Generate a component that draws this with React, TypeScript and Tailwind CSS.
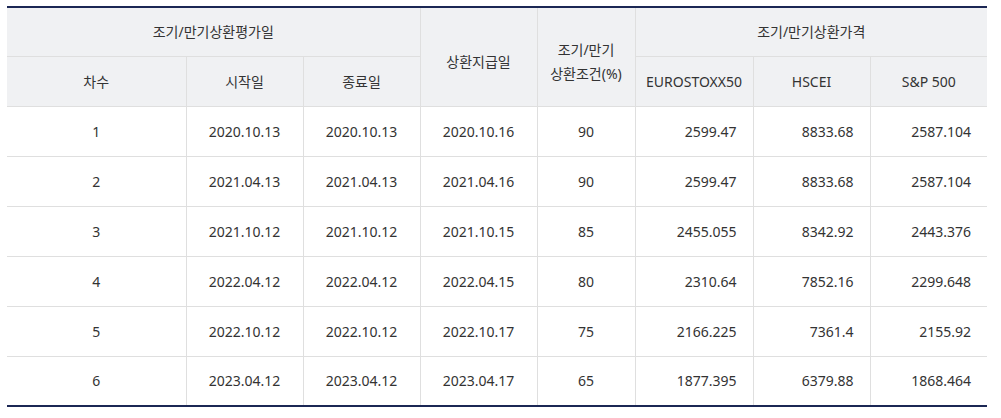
const rows = [
  ["1", "2020.10.13", "2020.10.13", "2020.10.16", "90", "2599.47", "8833.68", "2587.104"],
  ["2", "2021.04.13", "2021.04.13", "2021.04.16", "90", "2599.47", "8833.68", "2587.104"],
  ["3", "2021.10.12", "2021.10.12", "2021.10.15", "85", "2455.055", "8342.92", "2443.376"],
  ["4", "2022.04.12", "2022.04.12", "2022.04.15", "80", "2310.64", "7852.16", "2299.648"],
  ["5", "2022.10.12", "2022.10.12", "2022.10.17", "75", "2166.225", "7361.4", "2155.92"],
  ["6", "2023.04.12", "2023.04.12", "2023.04.17", "65", "1877.395", "6379.88", "1868.464"],
];

const th = "bg-[#f0f1f3] font-normal border-b border-[#dfdfdf] align-middle";

export default function App() {
  return (
    <div
      className="bg-white w-[1001px] h-[418px] pt-[6px] pl-[7px] text-[14px] text-[#333]"
      style={{ fontFamily: '"Noto Sans", "Noto Sans CJK KR", sans-serif' }}
    >
      <table className="border-collapse table-fixed w-[980px] border-t-2 border-b-2 border-[#1b2754]">
        <colgroup>
          <col className="w-[179px]" />
          <col className="w-[117px]" />
          <col className="w-[117px]" />
          <col className="w-[117px]" />
          <col className="w-[98px]" />
          <col className="w-[118px]" />
          <col className="w-[117px]" />
          <col className="w-[117px]" />
        </colgroup>
        <thead>
          <tr className="h-[49px]">
            <th colSpan={3} className={`${th} border-r`}>
              조기/만기상환평가일
            </th>
            <th rowSpan={2} className={`${th} border-r pt-[10px]`}>
              상환지급일
            </th>
            <th rowSpan={2} className={`${th} border-r leading-[24px] pt-[10px]`}>
              조기/만기
              <br />
              상환조건(%)
            </th>
            <th colSpan={3} className={th}>
              조기/만기상환가격
            </th>
          </tr>
          <tr className="h-[50px]">
            <th className={`${th} border-r`}>차수</th>
            <th className={`${th} border-r`}>시작일</th>
            <th className={`${th} border-r`}>종료일</th>
            <th className={`${th} border-r`}>EUROSTOXX50</th>
            <th className={`${th} border-r`}>HSCEI</th>
            <th className={th}>S&amp;P 500</th>
          </tr>
        </thead>
        <tbody>
          {rows.map((r, i) => (
            <tr key={i} className={`h-[50px] ${i < rows.length - 1 ? "border-b border-[#dfdfdf]" : ""}`}>
              {r.map((c, j) => (
                <td
                  key={j}
                  className={`${j < 7 ? "border-r border-[#dfdfdf]" : ""} ${j >= 5 ? "text-right pr-[16px]" : "text-center"}`}
                >
                  {c}
                </td>
              ))}
            </tr>
          ))}
        </tbody>
      </table>
    </div>
  );
}
